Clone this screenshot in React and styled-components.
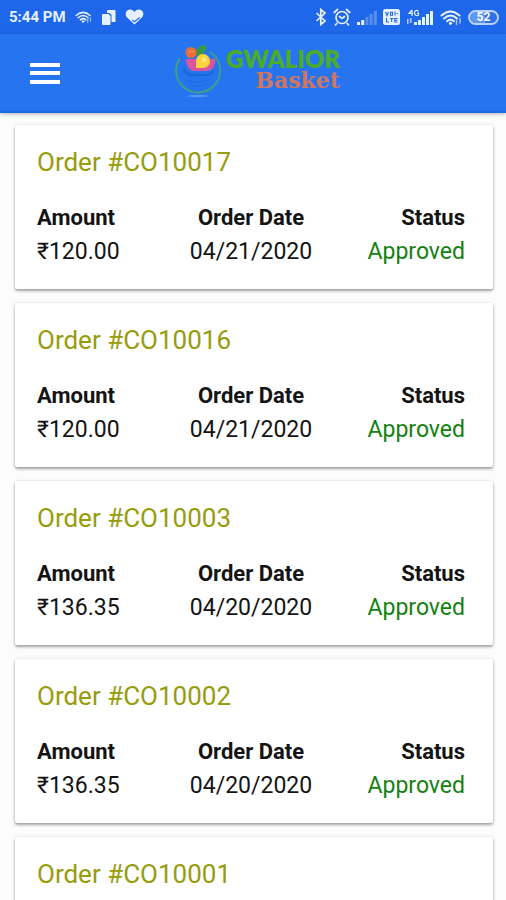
import React from "react";
import styled, { createGlobalStyle } from "styled-components";

const GlobalStyle = createGlobalStyle`
  *, *::before, *::after { box-sizing: border-box; }
  body {
    margin: 0;
    background: #fcfcfc;
    color: #141414;
    font-family: Roboto, "Noto Sans", sans-serif;
  }
`;

const Screen = styled.div`
  display: flex;
  flex-direction: column;
  height: 100vh;
`;

const StatusBar = styled.div`
  display: flex;
  flex: none;
  align-items: center;
  justify-content: space-between;
  height: 34px;
  padding: 0 7px 0 9px;
  background: #1e67ea;
  color: #e6f0ff;
`;

const StatusGroup = styled.div`
  display: flex;
  align-items: center;
  gap: ${(p) => p.$gap}px;

  svg {
    display: block;
    flex: none;
  }
`;

const Clock = styled.time`
  font-size: 15px;
  font-weight: 700;
  line-height: 20px;
`;

const AppBar = styled.header`
  display: grid;
  flex: none;
  grid-template-columns: 1fr auto 1fr;
  align-items: center;
  height: 79px;
  padding: 0 24px;
  background: #2774f0;
  border-bottom: 2px solid #1a6ae4;
  box-shadow: 0 1px 4px rgba(0, 0, 0, 0.3);
  z-index: 1;
`;

const MenuButton = styled.button`
  display: grid;
  place-items: center;
  justify-self: start;
  width: 42px;
  height: 42px;
  padding: 0;
  border: 0;
  background: none;
  color: #fff;
  cursor: pointer;
`;

const Brand = styled.div`
  display: flex;
  align-items: flex-start;
  gap: 4px;
  padding: 0 0 4px 8px;

  svg {
    display: block;
  }
`;

const BrandText = styled.div`
  display: flex;
  flex-direction: column;
  align-items: flex-end;
  padding-top: 4px;
`;

const BrandName = styled.span`
  color: #4cac27;
  font: 800 24px/24px Lato, sans-serif;
`;

const BrandSub = styled.span`
  color: #cf7660;
  font: 700 22px/18px "DejaVu Serif", serif;
`;

const OrderList = styled.main`
  display: flex;
  flex: 1;
  flex-direction: column;
  gap: 14px;
  min-height: 0;
  padding: 12px 13px 12px 15px;
  overflow-y: auto;
  scrollbar-width: none;
`;

const Card = styled.article`
  flex: none;
  min-height: 164px;
  padding: 22px 28px 20px 22px;
  border-radius: 2px;
  background: #fff;
  box-shadow: 0 2px 3px rgba(0, 0, 0, 0.34), 0 0 3px rgba(0, 0, 0, 0.12);
`;

const OrderTitle = styled.h2`
  margin: 0 0 24px;
  color: #979c0c;
  font-size: 26px;
  font-weight: 400;
  line-height: 30px;
`;

const Details = styled.dl`
  display: grid;
  grid-template-columns: repeat(3, 1fr);
  margin: 0;
`;

const Detail = styled.div`
  text-align: ${(p) => p.$align};
  white-space: nowrap;
`;

const Label = styled.dt`
  font-size: 22px;
  font-weight: 700;
  line-height: 34px;
`;

const Value = styled.dd`
  margin: 0;
  color: ${(p) => (p.$approved ? "#118211" : "inherit")};
  font-size: 23px;
  line-height: 34px;
`;

const orders = [
  { id: "CO10017", amount: "₹120.00", date: "04/21/2020", status: "Approved" },
  { id: "CO10016", amount: "₹120.00", date: "04/21/2020", status: "Approved" },
  { id: "CO10003", amount: "₹136.35", date: "04/20/2020", status: "Approved" },
  { id: "CO10002", amount: "₹136.35", date: "04/20/2020", status: "Approved" },
  { id: "CO10001" },
];

function WifiIcon({ width, height }) {
  return (
    <svg width={width} height={height} viewBox="0 0 22 17" fill="none" stroke="currentColor" strokeWidth="2" strokeLinecap="round" aria-hidden="true">
      <path d="M1.5 6.5Q10.5-1.5 19.5 6.5" />
      <path d="M4 9.5Q10.5 3.5 17 9.5" />
      <path d="M7 12.2Q10.5 9 14 12.2" />
      <circle cx="10.5" cy="14.3" r="1.2" fill="currentColor" strokeWidth="1" />
      <path d="M16.5 15.5v-4M20 9.5v4.5" strokeWidth="1.4" opacity=".7" />
    </svg>
  );
}

function CardsIcon() {
  return (
    <svg width="15" height="17" viewBox="0 0 15 17" fill="currentColor" aria-hidden="true">
      <path d="M7 1h6.500a1 1 0 0 1 1 1v11h-4V6L8.500 4H6V2a1 1 0 0 1 1-1Z" />
      <path d="M2 5h5.500L9.500 7v8a1 1 0 0 1-1 1H2a1 1 0 0 1-1-1V6a1 1 0 0 1 1-1Z" />
    </svg>
  );
}

function HeartIcon() {
  return (
    <svg width="19" height="18" viewBox="0 0 20 18" aria-hidden="true">
      <path d="M10 17 2.200 9.500C-.8 6 1 1.500 5 1.200c2.200-.1 4 1 5 2.500 1-1.500 2.800-2.600 5-2.500 4 .3 5.800 4.800 2.800 8.300Z" fill="currentColor" />
      <path d="m7.500 12 2.500 2 5.500-4.500" fill="none" stroke="#1e67ea" strokeWidth="1.200" />
    </svg>
  );
}

function BluetoothIcon() {
  return (
    <svg width="12" height="18" viewBox="0 0 12 18" fill="none" stroke="currentColor" strokeWidth="1.700" aria-hidden="true">
      <path d="m1.500 5 8.500 8-4.200 3.500v-15L10 5l-8.500 8" />
    </svg>
  );
}

function AlarmIcon() {
  return (
    <svg width="18" height="18" viewBox="0 0 18 18" fill="none" stroke="currentColor" strokeWidth="1.700" strokeLinecap="round" aria-hidden="true">
      <circle cx="9" cy="9.500" r="6" />
      <path d="M1.200 4.500 4.500 1.500M16.800 4.500l-3.300-3M3.800 15.500l-1.300 1.300M14.200 15.500l1.300 1.300M6.500 8.500 9 10.500l2.500-2" />
    </svg>
  );
}

function WeakSignalIcon() {
  return (
    <svg width="20" height="15" viewBox="0 0 20 15" fill="currentColor" aria-hidden="true">
      <path d="M0 12h3v3H0zM4.200 10h3v5h-3z" />
      <path d="M8.400 7h3v8h-3zM12.600 4h3v11h-3zM16.800 1h3v14h-3z" opacity=".3" />
    </svg>
  );
}

function VolteIcon() {
  return (
    <svg width="17" height="16" viewBox="0 0 17 16" aria-hidden="true">
      <rect x="0" y="0" width="17" height="16" rx="2.500" fill="currentColor" />
      <g fill="none" stroke="#1e67ea" strokeWidth="1.100">
        <path d="m2.500 3 1.500 3.500L5.500 3M7.500 3.200h2v3h-2zM12 2.500v4M13.500 4.800h1.500M3.500 9v4H6M7 9.500h3.500M8.700 9.500V13M14.500 9.500h-2.700V13h2.700M11.800 11.200h2.500" />
      </g>
    </svg>
  );
}

function FourGSignalIcon() {
  return (
    <svg width="28" height="17" viewBox="0 0 28 17" fill="currentColor" aria-hidden="true">
      <path d="M1 10h1.500v5H1zM4 9h1.500v5H4z" opacity=".75" />
      <path d="M8 13h3v3H8zM12 11h3v5h-3zM16 8h3v8h-3zM20 5h3v11h-3zM24 2h3v14h-3z" />
      <path d="M6 1 3 4.500h4M6 1v6M12.500 2.200C10 .5 8.500 2 8.500 4s2 3.500 4 2V4.200H11" fill="none" stroke="currentColor" strokeWidth="1.200" />
    </svg>
  );
}

const Battery = styled.span`
  display: grid;
  place-items: center;
  width: 31px;
  height: 15px;
  border: 2px solid #b9d2ff;
  border-radius: 8px;
  background: linear-gradient(90deg, #5f95f3 55%, #2e72ec 55%);
  color: #fff;
  font-size: 12px;
  font-weight: 700;
  line-height: 11px;
`;

function MenuIcon() {
  return (
    <svg width="30" height="22" viewBox="0 0 30 22" fill="currentColor" aria-hidden="true">
      <path d="M0 1h30v4H0zM0 9h30v4H0zM0 18h30v4H0z" />
    </svg>
  );
}

function BasketLogo() {
  return (
    <svg width="48" height="56" viewBox="0 0 48 56" aria-hidden="true">
      <ellipse cx="24" cy="53" rx="11" ry="1.200" fill="#8cb5f5" opacity=".5" />
      <path d="M6 15A22 22 0 1 0 36 9" fill="none" stroke="#3f9f88" strokeWidth="2" />
      <path d="M10 26q2 6 8 6h14q5 0 7-4" fill="none" stroke="#176bd6" strokeWidth="2.500" />
      <path d="M10 37q13 4 28-1M15 42q10 3 19-1" fill="none" stroke="#1f6ddd" strokeWidth="1.200" />
      <path d="M12 16h29c1 7-3 12-9 12H21c-6 0-9-5-9-12Z" fill="#d9569e" />
      <path d="M21 12c0-6 4-10 11-10 1 6-2 10-8 11Z" fill="#39964f" />
      <circle cx="17" cy="9.500" r="5.500" fill="#ec6c39" />
      <path d="M22 18a7 7 0 1 1 7 7h-7Z" fill="#fbd43b" />
      <path d="M15 9.500q2-3 5 0" fill="none" stroke="#f69a6c" strokeWidth="1.200" />
      <circle cx="30" cy="17" r="2.500" fill="#fde471" />
    </svg>
  );
}

function OrderCard({ order }) {
  return (
    <Card>
      <OrderTitle>Order #{order.id}</OrderTitle>
      {order.amount && (
        <Details>
          <Detail $align="left">
            <Label>Amount</Label>
            <Value>{order.amount}</Value>
          </Detail>
          <Detail $align="center">
            <Label>Order Date</Label>
            <Value>{order.date}</Value>
          </Detail>
          <Detail $align="right">
            <Label>Status</Label>
            <Value $approved={order.status === "Approved"}>{order.status}</Value>
          </Detail>
        </Details>
      )}
    </Card>
  );
}

export default function App() {
  return (
    <Screen>
      <GlobalStyle />
      <StatusBar>
        <StatusGroup $gap={9}>
          <Clock>5:44 PM</Clock>
          <WifiIcon width={17} height={14} />
          <CardsIcon />
          <HeartIcon />
        </StatusGroup>
        <StatusGroup $gap={6}>
          <BluetoothIcon />
          <AlarmIcon />
          <WeakSignalIcon />
          <VolteIcon />
          <FourGSignalIcon />
          <WifiIcon width={22} height={17} />
          <Battery>52</Battery>
        </StatusGroup>
      </StatusBar>
      <AppBar>
        <MenuButton type="button" aria-label="Menu">
          <MenuIcon />
        </MenuButton>
        <Brand>
          <BasketLogo />
          <BrandText>
            <BrandName>GWALIOR</BrandName>
            <BrandSub>Basket</BrandSub>
          </BrandText>
        </Brand>
      </AppBar>
      <OrderList>
        {orders.map((order) => (
          <OrderCard key={order.id} order={order} />
        ))}
      </OrderList>
    </Screen>
  );
}
